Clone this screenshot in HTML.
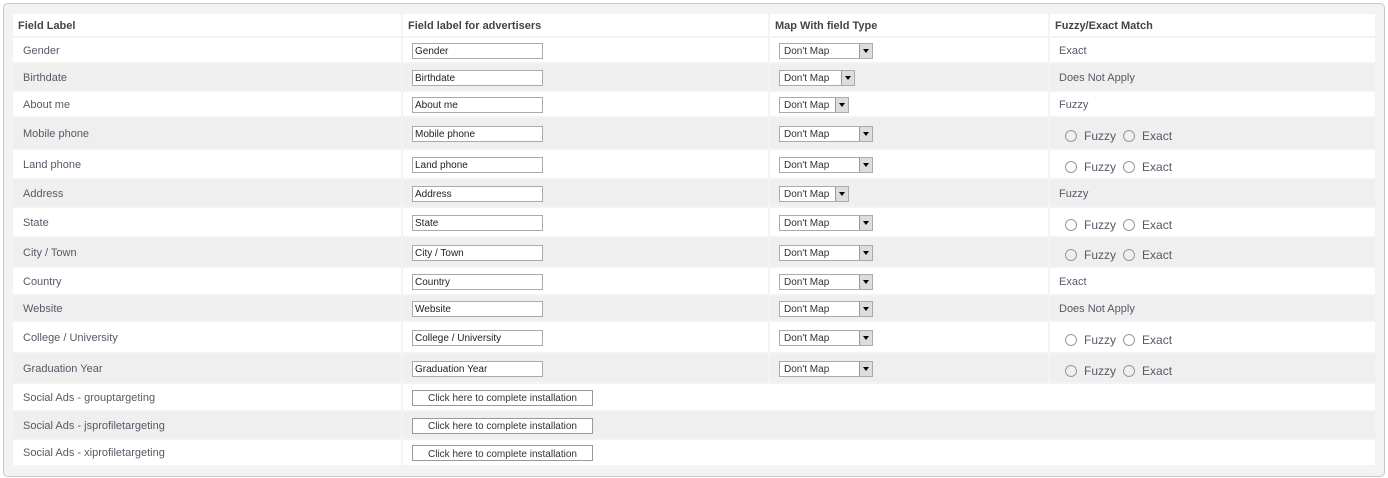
<!DOCTYPE html><html><head><style>
body{margin:0;width:1388px;height:478px;background:#fff;font-family:"Liberation Sans",sans-serif;position:relative;overflow:hidden}
.box{position:absolute;left:3px;top:3px;width:1380px;height:472px;background:#f3f3f3;border:1px solid #c8c8c8;border-radius:5px}
.c{position:absolute;display:flex;align-items:center;font-size:11px;color:#565a66;box-sizing:border-box;padding-top:1px}
.h{font-weight:bold;color:#444;padding-left:5px}
.l{padding-left:10px}
.inp{border:1px solid #aaa;width:131px;height:16px;box-sizing:border-box;font-size:10px;color:#222;padding:2px 0 0 2px;background:#fff;display:flex;align-items:center}
.sel{border:1px solid #aaa;height:16px;box-sizing:border-box;font-size:10px;color:#333;padding:2px 0 0 4px;background:#fff;position:relative;display:flex;align-items:center}
.sel i{position:absolute;right:0;top:0;width:12px;height:14px;background:#ddd;border-left:1px solid #999}
.sel i:after{content:"";position:absolute;left:3px;top:5px;border:3px solid transparent;border-top:4px solid #000}
.btn{border:1px solid #999;width:181px;height:16px;box-sizing:border-box;font-size:10px;color:#333;background:#fff;display:flex;align-items:center;justify-content:center;padding-top:2px}
.r{display:inline-block;width:10px;height:10px;border:1px solid #999;border-radius:50%;margin-right:7px;margin-left:2px;vertical-align:0px}
.rad{padding-left:13px;font-size:12px;padding-top:5px}
</style></head><body><div class="box"></div>
<div id="t"></div>
<script>
var cols=[[13,388],[403,365],[770,278],[1050,325]];
var rows=[[14,22],[38,24],[64,26],[92,24],[118,30],[150,28],[180,26],[208,28],[238,28],[268,26],[296,24],[322,30],[354,28],[384,26],[412,26],[440,25]];
var d=[["Gender",94,"Exact"],["Birthdate",76,"Does Not Apply"],["About me",70,"Fuzzy"],["Mobile phone",94,0],["Land phone",94,0],["Address",70,"Fuzzy"],["State",94,0],["City / Town",94,0],["Country",94,"Exact"],["Website",94,"Does Not Apply"],["College / University",94,0],["Graduation Year",94,0]];
var h="";
function cell(ci,ri,cls,inner,bg,w){var c=cols[ci],r=rows[ri];h+='<div class="c '+cls+'" style="left:'+c[0]+'px;top:'+r[0]+'px;width:'+(w||c[1])+'px;height:'+r[1]+'px;background:'+bg+'">'+inner+'</div>';}
["Field Label","Field label for advertisers","Map With field Type","Fuzzy/Exact Match"].forEach(function(t,i){cell(i,0,"h",t,"#fff")});
d.forEach(function(x,i){var ri=i+1,bg=ri%2?"#fff":"#efefef";
cell(0,ri,"l",x[0],bg);
cell(1,ri,"l",'<div class="inp" style="margin-left:-1px">'+x[0]+'</div>',bg);
cell(2,ri,"l",'<div class="sel" style="width:'+x[1]+'px;margin-left:-1px">Don\'t Map<i></i></div>',bg);
cell(3,ri,x[2]?"l":"rad",x[2]?'<span style="margin-left:-1px">'+x[2]+'</span>':'<span class="r"></span>Fuzzy <span class="r" style="margin-left:7px"></span>Exact',bg);});
["grouptargeting","jsprofiletargeting","xiprofiletargeting"].forEach(function(t,i){var ri=13+i,bg=ri%2?"#fff":"#efefef";
cell(0,ri,"l","Social Ads - "+t,bg);
cell(1,ri,"l",'<div class="btn" style="margin-left:-1px">Click here to complete installation</div>',bg,972);});
document.getElementById("t").innerHTML=h;
</script></body></html>
